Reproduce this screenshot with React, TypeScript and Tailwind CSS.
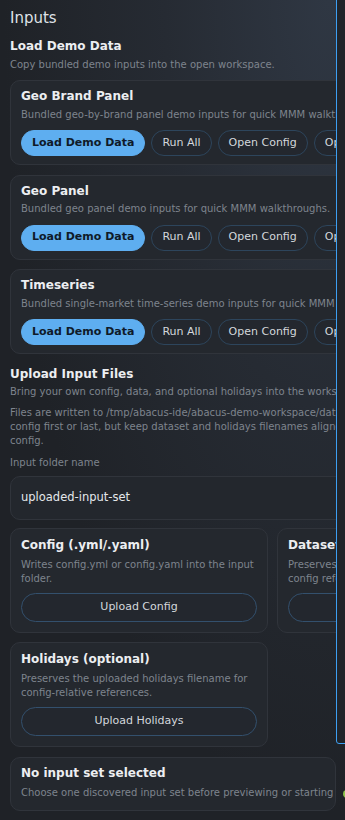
import React from "react";

const demoCards = [
  { title: "Geo Brand Panel", desc: "Bundled geo-by-brand panel demo inputs for quick MMM walkthroughs." },
  { title: "Geo Panel", desc: "Bundled geo panel demo inputs for quick MMM walkthroughs." },
  { title: "Timeseries", desc: "Bundled single-market time-series demo inputs for quick MMM walkthroughs." },
];

function DemoCard({ title, desc }: { title: string; desc: string }) {
  return (
    <div className="rounded-[10px] border border-[#30343b] bg-[#24282e] px-[10px] pt-[7px] pb-[8px]">
      <div className="text-[12px] leading-[16px] font-bold text-[#eceef1] whitespace-nowrap">{title}</div>
      <div className="mt-[3.5px] text-[10px] leading-[14px] text-[#7e848d] whitespace-nowrap">{desc}</div>
      <div className="mt-[8.5px] flex gap-[6px]">
        <button className="h-[26px] rounded-full border border-[#5eaef0] bg-[#5eaef0] px-[10px] text-[11px] font-bold text-[#0f1a29] whitespace-nowrap">
          Load Demo Data
        </button>
        <button className="h-[26px] rounded-full border border-[#2d455c] bg-[#23272e] px-[10px] text-[11px] text-[#d3d7dc] whitespace-nowrap">
          Run All
        </button>
        <button className="h-[26px] rounded-full border border-[#2d455c] bg-[#23272e] px-[10px] text-[11px] text-[#d3d7dc] whitespace-nowrap">
          Open Config
        </button>
        <button className="h-[26px] rounded-full border border-[#2d455c] bg-[#23272e] px-[10px] text-[11px] text-[#d3d7dc] whitespace-nowrap">
          Open Data
        </button>
      </div>
    </div>
  );
}

function UploadCard({ title, lines, action }: { title: string; lines: string[]; action: string }) {
  return (
    <div className="rounded-[10px] border border-[#30343b] bg-[#24282e] px-[10px] pt-[8px] pb-[9.5px]">
      <div className="text-[12px] leading-[16px] font-bold text-[#eceef1] whitespace-nowrap">{title}</div>
      <div className="mt-[5px] text-[10px] leading-[14px] text-[#7e848d]">
        {lines.map((l, i) => (
          <div key={i} className="whitespace-nowrap">{l}</div>
        ))}
      </div>
      <button className="mt-[6.5px] flex h-[29.5px] w-full items-center justify-center rounded-full border border-[#33506d] bg-[#23272e] text-[11px] text-[#d3d7dc]">
        {action}
      </button>
    </div>
  );
}

export default function App() {
  return (
    <div className="relative h-[820px] w-[345px] overflow-hidden bg-[#1f2227] bg-[radial-gradient(ellipse_at_95%_0%,#2f3743_0%,#262b33_35%,#1f2227_70%)] font-['DejaVu_Sans',sans-serif]">
      <div className="w-[545px] pl-[10px] pt-[8px] pr-[10px]">
        <div className="text-[15px] leading-[20px] text-[#dfe2e7]">Inputs</div>

        <div className="mt-[9.5px] text-[12px] leading-[16px] font-bold text-[#eceef1]">Load Demo Data</div>
        <div className="mt-[4px] text-[10px] leading-[14px] text-[#7e848d]">Copy bundled demo inputs into the open workspace.</div>

        <div className="mt-[8.7px] flex flex-col gap-[9.5px]">
          {demoCards.map((c) => (
            <DemoCard key={c.title} title={c.title} desc={c.desc} />
          ))}
        </div>

        <div className="mt-[11.6px] text-[12px] leading-[16px] font-bold text-[#eceef1]">Upload Input Files</div>
        <div className="mt-[3.5px] text-[10px] leading-[14px] text-[#7e848d] whitespace-nowrap">
          Bring your own config, data, and optional holidays into the workspace.
        </div>
        <div className="mt-[7px] text-[10px] leading-[14px] text-[#7e848d]">
          <div className="whitespace-nowrap">Files are written to /tmp/abacus-ide/abacus-demo-workspace/data. Upload</div>
          <div className="whitespace-nowrap">config first or last, but keep dataset and holidays filenames aligned with the</div>
          <div className="whitespace-nowrap">config.</div>
        </div>
        <div className="mt-[7.7px] text-[10px] leading-[14px] text-[#7e848d]">Input folder name</div>
        <div className="mt-[6.2px] flex h-[43.5px] items-center rounded-[10px] border border-[#30343b] bg-[#23272d] px-[10px] text-[11.5px] text-[#e4e7eb]">
          uploaded-input-set
        </div>

        <div className="mt-[8.8px] grid grid-cols-[258px_258px] gap-x-[9px] gap-y-[9.4px]">
          <UploadCard
            title="Config (.yml/.yaml)"
            lines={["Writes config.yml or config.yaml into the input", "folder."]}
            action="Upload Config"
          />
          <UploadCard
            title="Dataset (.csv)"
            lines={["Preserves the uploaded dataset filename for", "config references."]}
            action="Upload Dataset"
          />
          <UploadCard
            title="Holidays (optional)"
            lines={["Preserves the uploaded holidays filename for", "config-relative references."]}
            action="Upload Holidays"
          />
        </div>

        <div className="mt-[10.5px] flex items-center gap-[7px]">
          <div className="w-[326px] shrink-0 overflow-hidden rounded-[10px] border border-[#30343b] bg-[#24282e] px-[10px] pt-[6.6px] pb-[9.5px]">
            <div className="text-[12px] leading-[16px] font-bold text-[#eceef1] whitespace-nowrap">No input set selected</div>
            <div className="mt-[5.5px] text-[10px] leading-[14px] text-[#7e848d] whitespace-nowrap">
              Choose one discovered input set before previewing or starting
            </div>
          </div>
          <div className="mt-[20px] h-[8px] w-[8px] shrink-0 rounded-full bg-[#8bc34a]" />
        </div>
      </div>

      <div className="absolute left-[336px] top-[-4px] h-[748px] w-[40px] rounded-[3px] border-[1.5px] border-[#3d9ff2] bg-[#212429]" />
    </div>
  );
}
